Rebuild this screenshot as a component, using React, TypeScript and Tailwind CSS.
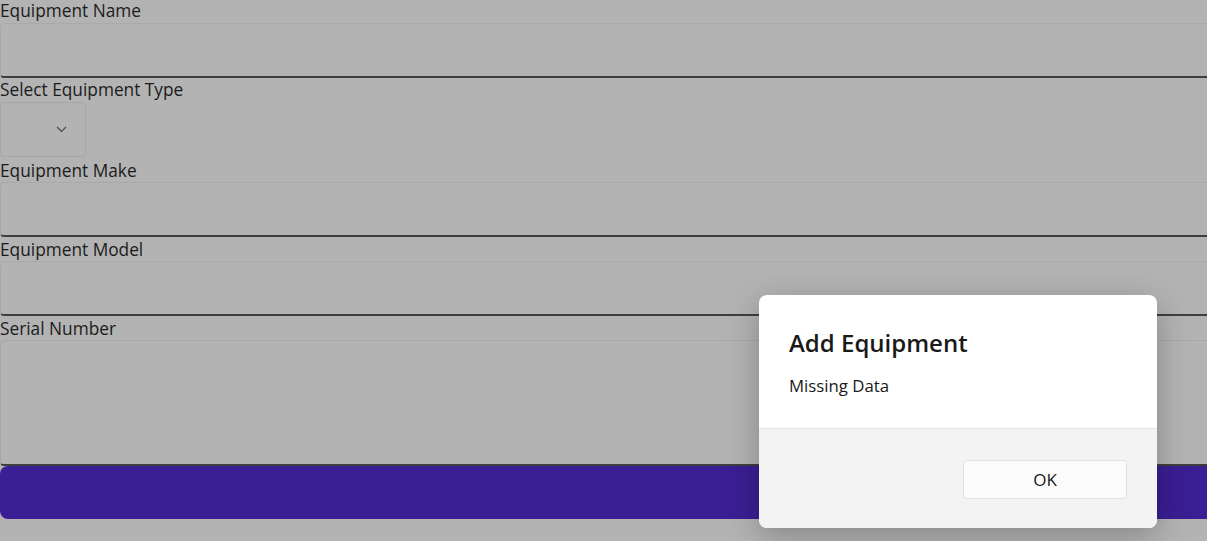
import React from "react";

const font = { fontFamily: '"Open Sans", "Noto Sans", sans-serif' };

const Label = ({ text, h }: { text: string; h: string }) => (
  <div className={`${h} text-[17.3px] leading-[21px] text-[#1b1b1b] whitespace-nowrap`}>{text}</div>
);

const Entry = ({ h }: { h: string }) => (
  <div className={`${h} rounded-[4px] border border-[#a9a9a9] border-b-2 border-b-[#3e3e3e] bg-[#b3b3b3]`} />
);

const App = () => {
  return (
    <div className="relative h-[541px] w-full overflow-hidden bg-[#b3b3b3]" style={font}>
      {/* form, a bit wider than the window like the original */}
      <div className="flex w-[1220px] flex-col">
        <Label text="Equipment Name" h="h-[23px]" />
        <Entry h="h-[55px]" />
        <Label text="Select Equipment Type" h="h-[23px] pt-[1px]" />
        <div className="my-px flex h-[55px] w-[86px] items-center justify-end rounded-[4px] border border-[#a6a6a6] pr-[18px]">
          <svg width="11" height="7" viewBox="0 0 11 7" fill="none">
            <path d="M1 1l4.5 4.5L10 1" stroke="#4a4a4a" strokeWidth="1.1" />
          </svg>
        </div>
        <Label text="Equipment Make" h="h-[24px] pt-[2px]" />
        <Entry h="h-[55px]" />
        <Label text="Equipment Model" h="h-[24px] pt-[2px]" />
        <Entry h="h-[55px]" />
        <Label text="Serial Number" h="h-[24px] pt-[2px]" />
        <Entry h="h-[126px]" />
        <button className="h-[53px] w-full rounded-[8px] bg-[#3a1e93]" />
      </div>

      {/* alert dialog */}
      <div className="absolute left-[759px] top-[295px] flex w-[398px] flex-col overflow-hidden rounded-[8px] bg-white shadow-[0_8px_32px_rgba(0,0,0,0.25)]">
        <div className="h-[133px] px-[30px] pt-[32px]">
          <div className="text-[24px] font-semibold leading-[32px] text-[#1a1a1a]">Add Equipment</div>
          <div className="mt-[16px] text-[16.8px] leading-[22px] text-[#1a1a1a]">Missing Data</div>
        </div>
        <div className="flex h-[100px] items-start justify-end border-t border-[#e5e5e5] bg-[#f3f3f3] pr-[30px] pt-[31px]">
          <button className="h-[39px] w-[164px] rounded-[4px] border border-[#e2e2e2] bg-[#fbfbfb] text-[17px] text-[#1a1a1a]">
            OK
          </button>
        </div>
      </div>
    </div>
  );
};

export default App;
